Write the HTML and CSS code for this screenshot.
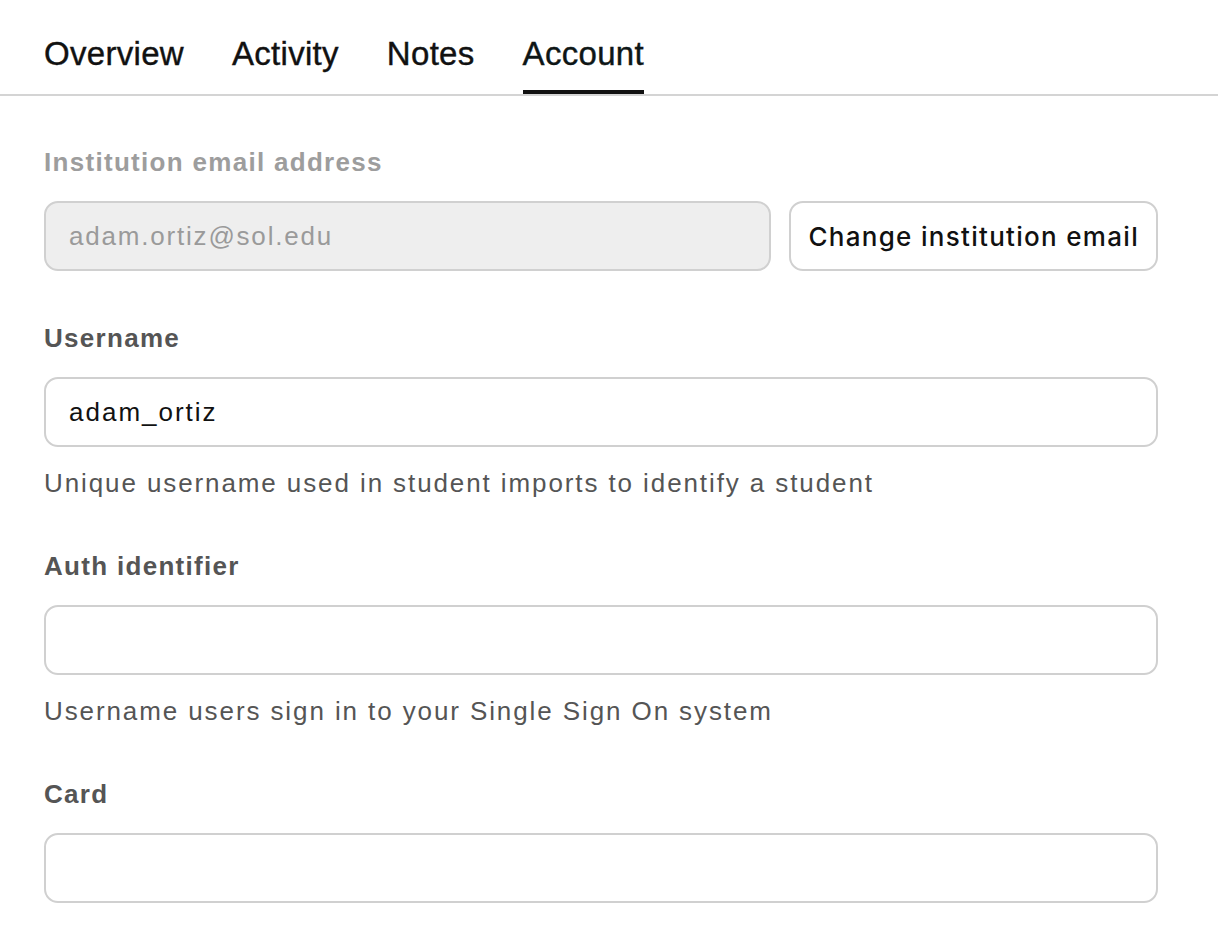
FILE: index.html
```html
<!DOCTYPE html>
<html>

<head>
  <meta charset="utf-8">
  <title>Account</title>
  <link rel="stylesheet" href="styles.css">
</head>

<body>
  <nav class="tabs">
    <a class="tab" href="#">Overview</a>
    <a class="tab" href="#">Activity</a>
    <a class="tab" href="#">Notes</a>
    <a class="tab active" href="#">Account</a>
  </nav>

  <main class="account">
    <section class="field first">
      <label class="label muted">Institution email address</label>
      <div class="row">
        <input class="box disabled" type="text" value="adam.ortiz@sol.edu" disabled>
        <button class="btn">Change institution email</button>
      </div>
    </section>

    <section class="field">
      <label class="label" for="username">Username</label>
      <input class="box" id="username" type="text" value="adam_ortiz">
      <p class="hint">Unique username used in student imports to identify a student</p>
    </section>

    <section class="field">
      <label class="label" for="auth">Auth identifier</label>
      <input class="box" id="auth" type="text">
      <p class="hint">Username users sign in to your Single Sign On system</p>
    </section>

    <section class="field">
      <label class="label" for="card">Card</label>
      <input class="box" id="card" type="text">
    </section>
  </main>
</body>

</html>
```

FILE: styles.css
```css
body {
  margin: 0;
  background-color: #fff;
  font-family: "Liberation Sans", Arial, sans-serif;
  color: #111;
}

.tabs {
  display: flex;
  gap: 48px;
  height: 94px;
  padding-left: 44px;
  border-bottom: 2px solid #d4d4d4;
}

.tab {
  display: flex;
  align-items: center;
  padding-top: 18px;
  box-sizing: border-box;
  height: 94px;
  font-size: 33px;
  letter-spacing: 0.3px;
  -webkit-text-stroke: 0.4px currentColor;
  color: #111;
  text-decoration: none;
  border-bottom: 4px solid transparent;
}

.tab.active {
  color: #0e1616;
  border-bottom-color: #111;
}

.account {
  padding: 48px 60px 0 44px;
}

.field {
  display: flex;
  flex-direction: column;
  margin-bottom: 47px;
}

.field.first {
  margin-bottom: 49px;
}

.label {
  line-height: 36px;
  margin-bottom: 21px;
  font-size: 26px;
  font-weight: bold;
  letter-spacing: 1.3px;
  color: #555;
}

.label.muted {
  color: #9d9d9d;
}

.row {
  display: flex;
  gap: 18px;
}

.box {
  box-sizing: border-box;
  height: 70px;
  width: 100%;
  padding: 0 23px;
  border: 2px solid #d0d0d0;
  border-radius: 14px;
  background: #fff;
  font-family: "Liberation Sans", Arial, sans-serif;
  font-size: 26px;
  letter-spacing: 2px;
  color: #111;
  outline: none;
}

.box.disabled {
  flex: 1;
  background: #eeeeee;
  color: #9a9a9a;
  letter-spacing: 1.8px;
}

.btn {
  appearance: none;
  flex: none;
  height: 70px;
  padding: 0 17px;
  border: 2px solid #d0d0d0;
  border-radius: 14px;
  background: #fff;
  font-family: Inter, sans-serif;
  font-size: 26px;
  font-weight: 500;
  letter-spacing: 1.3px;
  color: #111;
}

.hint {
  margin: 18px 0 0;
  line-height: 36px;
  font-size: 26px;
  letter-spacing: 1.9px;
  color: #555;
}
```
